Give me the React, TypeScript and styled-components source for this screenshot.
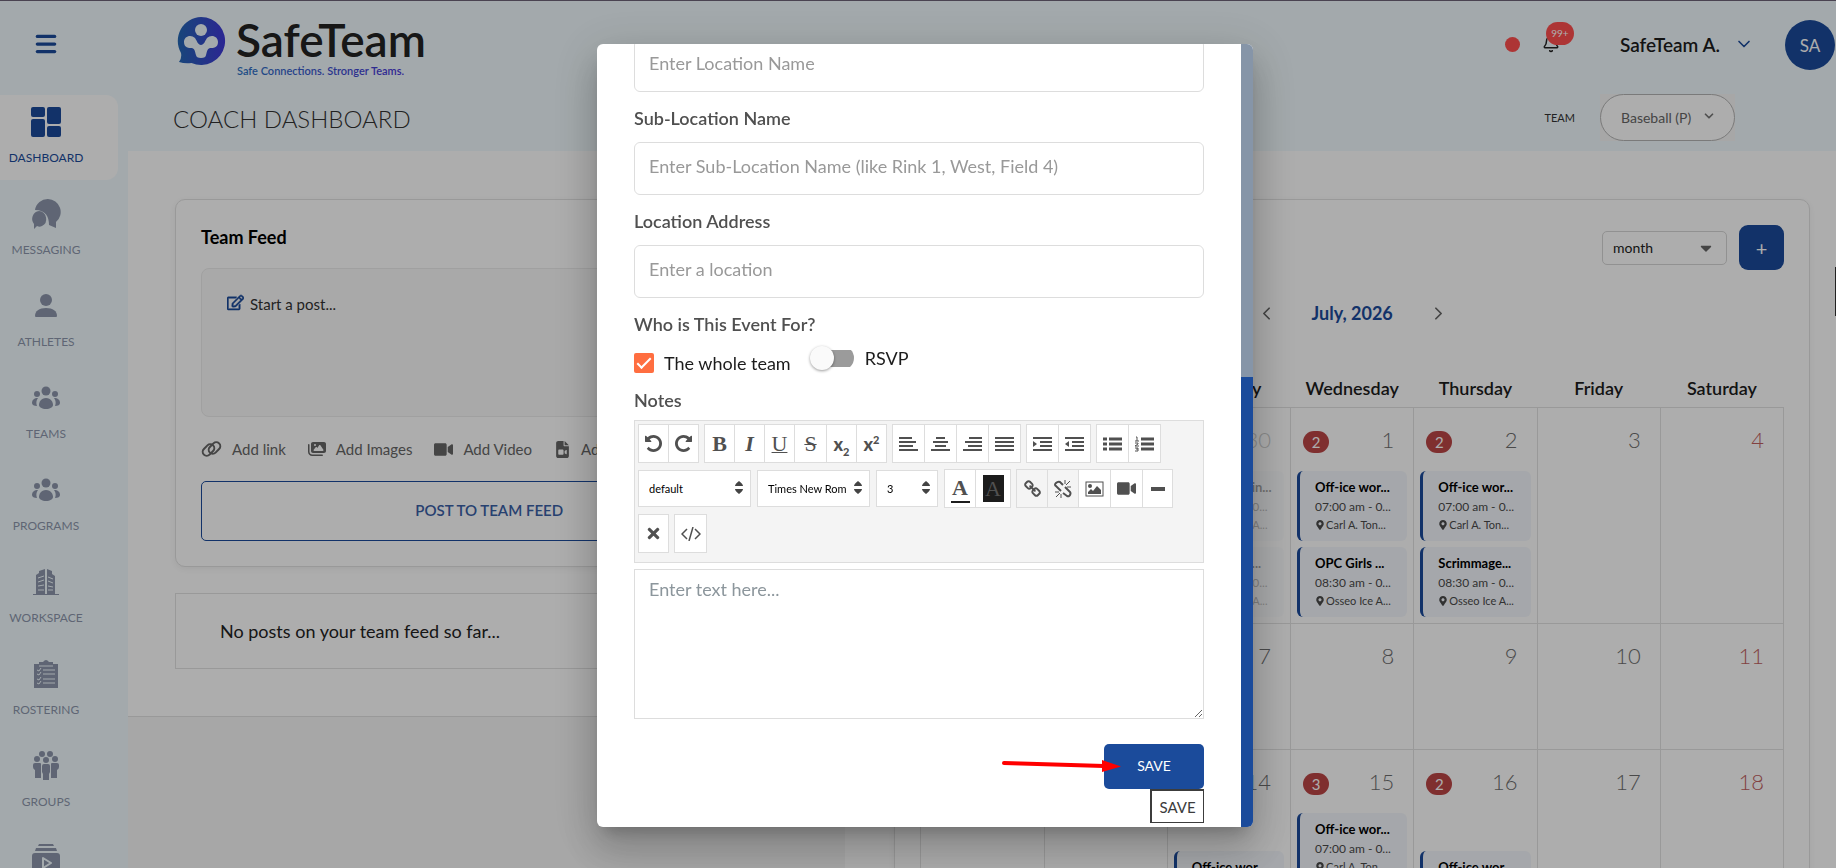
import React from "react";
import styled, { createGlobalStyle } from "styled-components";
import {
  FaCaretDown,
  FaMapMarkerAlt,
  FaRegEdit,
  FaTimes,
  FaVideo,
} from "react-icons/fa";
import { FaFileVideo, FaImages } from "react-icons/fa6";
import { ChevronDown, ChevronLeft, ChevronRight, Bell, Menu } from "lucide-react";

const blue = "#1b4b9b";
const line = "#e2e2e2";
const ink = "#505050";

const GlobalStyle = createGlobalStyle`
  *, *::before, *::after { box-sizing: border-box; }
  body {
    margin: 0;
    overflow: hidden;
    background: #f6f6f6;
    color: #222;
    font-family: Lato, "Open Sans", sans-serif;
    font-size: 14px;
  }
  button, input, select, textarea { font: inherit; color: inherit; margin: 0; }
  button { cursor: pointer; padding: 0; border: 0; background: none; }
  h1, h2, p, ul { margin: 0; padding: 0; font-weight: 400; }
  ul { list-style: none; }
  a { color: inherit; text-decoration: none; }
`;

/* ---------- page shell ---------- */

const Shell = styled.div`
  height: 100vh;
  overflow: hidden;
  display: flex;
  border-top: 1px solid #6e6478;
`;

const Sidebar = styled.nav`
  flex: 0 0 128px;
  background: #f1fafe;
  overflow: hidden;
`;

const MenuButton = styled.button`
  display: flex;
  align-items: center;
  justify-content: center;
  width: 92px;
  height: 86px;
  margin-bottom: 8px;
  color: ${blue};
`;

const NavItem = styled.a<{ $active?: boolean }>`
  display: block;
  width: 118px;
  height: 85px;
  margin-bottom: 7px;
  padding: 12px 26px 0 0;
  text-align: center;
  border-radius: 0 12px 12px 0;
  background: ${(p) => (p.$active ? "#fff" : "transparent")};
  color: ${(p) => (p.$active ? blue : "#8c96ac")};
`;

const NavIcon = styled.span`
  display: flex;
  align-items: center;
  justify-content: center;
  height: 30px;
  margin-bottom: 13px;
`;

const NavLabel = styled.span`
  display: block;
  font-size: 12px;
  line-height: 16px;
`;

const Page = styled.div`
  flex: 1;
  min-width: 0;
  display: flex;
  flex-direction: column;
`;

const Header = styled.header`
  background: #f1fafe;
  height: 150px;
  flex: none;
`;

const TopBar = styled.div`
  display: flex;
  align-items: center;
  height: 86px;
  padding-left: 49px;
`;

const Account = styled.div`
  display: flex;
  align-items: center;
  margin-left: auto;
`;

const StatusDot = styled.span`
  width: 15px;
  height: 15px;
  border-radius: 50%;
  background: #ff4e4e;
`;

const BellButton = styled.button`
  position: relative;
  display: flex;
  margin-left: 22px;
  color: #222;
`;

const BellCount = styled.span`
  position: absolute;
  left: 4px;
  top: -13px;
  width: 28px;
  height: 23px;
  border-radius: 12px;
  background: #ff4e4e;
  color: #fff;
  font-size: 10px;
  line-height: 23px;
  text-align: center;
`;

const UserButton = styled.button`
  display: flex;
  align-items: center;
  gap: 14px;
  margin-left: 60px;
  color: #1c1c1c;
  font-size: 19px;
  font-weight: 600;
`;

const Avatar = styled.span`
  display: flex;
  align-items: center;
  justify-content: center;
  width: 50px;
  height: 50px;
  margin: 2px 1px 0 31px;
  border-radius: 50%;
  background: ${blue};
  color: #fff;
  font-size: 17px;
`;

const TitleBar = styled.div`
  display: flex;
  align-items: center;
  height: 64px;
  padding: 0 101px 0 45px;
`;

const PageTitle = styled.h1`
  font-size: 24px;
  font-weight: 300;
  line-height: 64px;
  color: #333;
`;

const TeamPicker = styled.label`
  display: flex;
  align-items: center;
  gap: 25px;
  margin: 0 0 4px auto;
  font-size: 11px;
  color: #333;
`;

const TeamBox = styled.span`
  display: flex;
  width: 135px;
  height: 47px;
  background: #f6f6f6;
  position: relative;
  svg { position: absolute; right: 19px; top: 15px; color: #777; pointer-events: none; }
`;

const TeamSelect = styled.select`
  appearance: none;
  width: 100%;
  padding: 0 0 0 20px;
  border: 1px solid #b4b4b4;
  border-radius: 24px;
  background: #fff;
  font-size: 14px;
  color: #666;
`;

const Columns = styled.main`
  flex: 1;
  min-height: 0;
  display: grid;
  grid-template-columns: 42fr 58fr;
  align-items: start;
`;

/* ---------- feed column ---------- */

const FeedColumn = styled.section`
  background: #fff;
  padding: 48px 42px 47px 47px;
  border-bottom: 1px solid ${line};
`;

const Card = styled.div`
  border: 1px solid ${line};
  border-radius: 10px;
  padding: 25px;
  background: #fff;
  box-shadow: 0 2px 6px rgba(0, 0, 0, 0.06);
`;

const CardTitle = styled.h2`
  font-size: 18px;
  font-weight: 700;
  line-height: 24px;
  color: #000;
  margin-bottom: 19px;
`;

const PostBox = styled.div`
  display: flex;
  gap: 6px;
  height: 149px;
  padding: 25px;
  border: 1px solid #ececec;
  border-radius: 8px;
  background: #fafafa;
  font-size: 15px;
  line-height: 21px;
  color: #333;
  svg { color: ${blue}; stroke: ${blue}; stroke-width: 16px; }
`;

const Attachments = styled.div`
  display: flex;
  align-items: center;
  gap: 22px;
  height: 64px;
  white-space: nowrap;
  overflow: hidden;
`;

const AttachButton = styled.button`
  display: flex;
  align-items: center;
  gap: 10px;
  font-size: 15px;
  color: #666;
`;

const PostButton = styled.button`
  width: 100%;
  height: 60px;
  padding-bottom: 3px;
  border: 1px solid ${blue};
  border-radius: 5px;
  color: #3a60a6;
  font-size: 15px;
  font-weight: 600;
`;

const EmptyNote = styled.p`
  margin-top: 26px;
  padding: 0 44px;
  border: 1px solid ${line};
  font-size: 18px;
  line-height: 74px;
`;

/* ---------- calendar column ---------- */

const CalendarColumn = styled.section`
  background: #fff;
  padding: 48px 26px 0 49px;
`;

const CalendarTools = styled.div`
  display: flex;
  justify-content: flex-end;
  align-items: center;
  gap: 12px;
`;

const RangeBox = styled.label`
  position: relative;
  svg { position: absolute; right: 12px; top: 8px; color: #666; pointer-events: none; }
`;

const RangeSelect = styled.select`
  appearance: none;
  width: 125px;
  height: 34px;
  padding: 0 10px;
  border: 1px solid #d6d6d6;
  border-radius: 5px;
  background: #fff;
  font-size: 14px;
  color: #222;
`;

const AddButton = styled.button`
  width: 45px;
  height: 45px;
  border-radius: 9px;
  background: ${blue};
  color: #fff;
  font-size: 20px;
  line-height: 40px;
`;

const MonthBar = styled.div`
  display: flex;
  align-items: center;
  justify-content: center;
  gap: 35px;
  height: 86px;
  color: #666;
  button { display: flex; }
`;

const MonthName = styled.h2`
  font-size: 18px;
  font-weight: 700;
  color: ${blue};
`;

const MonthTable = styled.table`
  width: 100%;
  table-layout: fixed;
  border-collapse: collapse;
`;

const WeekHead = styled.th`
  height: 51px;
  padding: 13px 0 0;
  font-size: 18px;
  font-weight: 600;
  color: #1c1c1c;
`;

const DayCell = styled.td<{ $tall?: boolean; $muted?: boolean }>`
  height: ${(p) => (p.$tall ? 216 : 126)}px;
  padding: 0 6px 5px;
  border: 1px solid ${line};
  vertical-align: top;
  opacity: ${(p) => (p.$muted ? 0.35 : 1)};
`;

const DayHead = styled.div`
  display: flex;
  justify-content: space-between;
  align-items: center;
  height: 63px;
  padding: 0 13px 0 6px;
`;

const DayNumber = styled.span<{ $weekend?: boolean }>`
  margin-left: auto;
  font-size: 22px;
  font-weight: 300;
  color: ${(p) => (p.$weekend ? "#c06060" : "#6e6e6e")};
`;

const DayCount = styled.span`
  width: 26px;
  height: 22px;
  margin-top: 6px;
  border-radius: 11px;
  background: #bc4646;
  color: #fff;
  font-size: 15px;
  line-height: 22px;
  text-align: center;
`;

const EventStack = styled.div<{ $offset?: boolean }>`
  display: flex;
  flex-direction: column;
  gap: 6px;
  padding-top: ${(p) => (p.$offset ? 38 : 0)}px;
`;

const EventCard = styled.div`
  height: 70px;
  padding: 6px 0 0 15px;
  border-left: 3px solid ${blue};
  border-radius: 6px;
  background: #f4f7fc;
  color: #4a4a4a;
  font-size: 12px;
  line-height: 18px;
  white-space: nowrap;
  overflow: hidden;
`;

const EventTitle = styled.div`
  font-size: 13px;
  font-weight: 700;
  line-height: 21px;
  color: #000;
`;

const EventPlace = styled.div`
  font-size: 11px;
  svg { vertical-align: -1px; margin-right: 1px; }
`;

const SideTab = styled.span`
  position: fixed;
  right: 0;
  top: 267px;
  width: 1px;
  height: 49px;
  background: #333;
`;

/* ---------- dialog ---------- */

const Overlay = styled.div`
  position: fixed;
  inset: 0;
  display: flex;
  justify-content: center;
  padding: 44px 0 41px 14px;
  background: rgba(0, 0, 0, 0.32);
`;

const Dialog = styled.div`
  display: flex;
  width: 656px;
  max-width: 100%;
  border-radius: 6px;
  overflow: hidden;
  background: #fff;
  box-shadow: 0 11px 15px -7px rgba(0, 0, 0, 0.2), 0 24px 38px 3px rgba(0, 0, 0, 0.14),
    0 9px 46px 8px rgba(0, 0, 0, 0.12);
`;

const DialogForm = styled.form`
  flex: 1;
  min-width: 0;
  display: flex;
  flex-direction: column;
  justify-content: flex-end;
  padding: 0 37px 38px;
  overflow: hidden;
`;

const ScrollTrack = styled.div`
  flex: 0 0 12px;
  display: flex;
  flex-direction: column;
  justify-content: flex-end;
  background: #8695a8;
`;

const ScrollThumb = styled.div`
  height: 450px;
  background: ${blue};
`;

const FieldLabel = styled.label`
  display: block;
  flex: none;
  margin: 14px 0 12px;
  font-size: 18px;
  font-weight: 600;
  line-height: 24px;
  color: ${ink};
`;

const FieldInput = styled.input`
  display: block;
  flex: none;
  width: 100%;
  height: 53px;
  padding: 0 14px 5px;
  border: 1px solid #ddd;
  border-radius: 6px;
  font-size: 18px;
  &::placeholder { color: #999; opacity: 1; }
`;

const Audience = styled.div`
  display: flex;
  flex: none;
  height: 52px;
  margin-top: -12px;
  padding-top: 10px;
  font-size: 18px;
  line-height: 24px;
  color: #1c1c1c;
`;

const CheckLabel = styled.label`
  display: flex;
  align-items: center;
  gap: 10px;
  height: 34px;
`;

const CheckBox = styled.input`
  appearance: none;
  width: 20px;
  height: 20px;
  border-radius: 2px;
  background: #ff6e40;
  display: grid;
  place-items: center;
  &::after {
    content: "";
    width: 14px;
    height: 7px;
    margin-top: -4px;
    border: solid #fff;
    border-width: 0 0 2px 2px;
    transform: rotate(-45deg);
  }
`;

const SwitchLabel = styled.label`
  display: flex;
  align-items: center;
  gap: 11px;
  height: 24px;
  margin-left: 19px;
`;

const Switch = styled.input`
  appearance: none;
  display: flex;
  align-items: center;
  width: 44px;
  height: 24px;
  background: linear-gradient(#9b9b9b, #9b9b9b) right center / 36px 17px no-repeat;
  border-radius: 12px;
  &::after {
    content: "";
    width: 24px;
    height: 24px;
    border-radius: 50%;
    background: #fafafa;
    box-shadow: 0 1px 3px rgba(0, 0, 0, 0.4);
  }
`;

const NotesLabel = styled(FieldLabel)`
  margin: 0 0 8px;
`;

const Toolbar = styled.div`
  display: flex;
  flex: none;
  flex-wrap: wrap;
  align-content: flex-start;
  align-items: center;
  gap: 6px 5px;
  height: 143px;
  padding: 3px 3px 0;
  border: 1px solid #ddd;
  background: #f4f4f4;
  color: ${ink};
`;

const ToolGroup = styled.div`
  display: flex;
  padding-right: 1px;
`;

const Tool = styled.button<{ $size?: "medium" | "wide" | "swatch"; $dim?: boolean }>`
  display: flex;
  align-items: center;
  justify-content: center;
  width: ${(p) => ({ medium: 32, wide: 33, swatch: 36 }[p.$size as string] || 31)}px;
  height: 39px;
  margin-right: -1px;
  border: 1px solid #ddd;
  background: ${(p) => (p.$dim ? "#f4f4f4" : "#fff")};
  color: ${ink};
`;

const Glyph = styled.span<{ $italic?: boolean; $light?: boolean; $deco?: string }>`
  font-family: "Liberation Serif", serif;
  font-size: 22px;
  line-height: 24px;
  font-weight: ${(p) => (p.$light ? 400 : 700)};
  font-style: ${(p) => (p.$italic ? "italic" : "normal")};
  text-decoration: ${(p) => p.$deco || "none"};
  text-decoration-thickness: 1px;
`;

const Script = styled.span`
  font-size: 18px;
  line-height: 20px;
  font-weight: 900;
  sub, sup { font-size: 11px; line-height: 0; }
`;

const InkA = styled(Glyph)`
  width: 19px;
  text-align: center;
  line-height: 26px;
  border-bottom: 2px solid #1c1c1c;
`;

const PaperA = styled(Glyph)`
  width: 21px;
  text-align: center;
  line-height: 27px;
  background: #1c1c1c;
`;

const PickBox = styled.label<{ $small?: boolean }>`
  position: relative;
  display: flex;
  width: ${(p) => (p.$small ? 62 : 113)}px;
  height: 37px;
  margin-right: 1px;
  svg { position: absolute; right: 8px; top: 11px; pointer-events: none; }
`;

const Pick = styled.select`
  appearance: none;
  width: 100%;
  padding: 0 10px;
  border: 1px solid #ddd;
  border-radius: 0;
  background: #fff;
  color: #000;
  font-size: 11px;
`;

const NotesArea = styled.textarea`
  display: block;
  flex: none;
  width: 100%;
  height: 150px;
  margin-top: 6px;
  padding: 7px 14px;
  border: 1px solid #ddd;
  font-size: 18px;
  line-height: 24px;
  &::placeholder { color: #8c969c; opacity: 1; }
`;

const Actions = styled.div`
  position: relative;
  display: flex;
  flex: none;
  justify-content: flex-end;
  margin-top: 25px;
`;

const SaveButton = styled.button`
  width: 100px;
  height: 45px;
  padding-bottom: 2px;
  border-radius: 5px;
  background: ${blue};
  color: #fff;
  font-size: 14px;
`;

const SaveTip = styled.span`
  position: absolute;
  right: 0;
  top: 45px;
  width: 54px;
  height: 34px;
  border: 1px solid #3c3c3c;
  border-width: 2px 1px 1px 2px;
  background: #fff;
  color: #3c3c3c;
  font-size: 15px;
  line-height: 33px;
  text-align: center;
`;

const Arrow = styled.svg`
  position: absolute;
  right: 83px;
  top: 13px;
`;

/* ---------- drawings ---------- */

const Logo = () => (
  <svg width="252" height="78" viewBox="0 -12 252 78" role="img" aria-label="SafeTeam">
    <defs>
      <linearGradient id="ball" x1="0" x2="1">
        <stop offset="0" stopColor="#2468b4" />
        <stop offset="1" stopColor="#4038d8" />
      </linearGradient>
      <linearGradient id="words" gradientUnits="userSpaceOnUse" x1="60" x2="222" y1="0" y2="0">
        <stop offset="0" stopColor="#2f74c4" />
        <stop offset="1" stopColor="#4838d8" />
      </linearGradient>
    </defs>
    <path d="M24 0a24 24 0 1 1-9.500 46Q8 47 2 45q3-4 2-9A24 24 0 0 1 24 0Z" fill="url(#ball)" />
    <circle cx="24" cy="13" r="6" fill="#f1fafe" />
    <path
      d="M7 25c0-6 7-8 11-4 2 3 3 7 6 7s4-4 6-7c4-4 11-2 11 4s-5 6-8 6c-3 1-3 4-4 7 0 2-2 3-5 3s-5-1-5-3c-1-3-1-6-4-7-3 0-8 0-8-6Z"
      fill="#f1fafe"
    />
    <text x="59" y="40" fontFamily="Lato" fontWeight="600" fontSize="46" fill="#222">
      SafeTeam
    </text>
    <text x="60" y="58" fontFamily="Lato" fontWeight="600" fontSize="11" fill="url(#words)">
      Safe Connections. Stronger Teams.
    </text>
  </svg>
);

const DashboardIcon = () => (
  <svg width="30" height="30" viewBox="0 0 30 30" fill="currentColor">
    <rect x="0" y="0" width="14" height="10" rx="2" />
    <rect x="16" y="0" width="14" height="17" rx="2" />
    <rect x="0" y="12" width="14" height="18" rx="2" />
    <rect x="16" y="19" width="14" height="11" rx="2" />
  </svg>
);

const MessagingIcon = () => (
  <svg width="30" height="30" viewBox="0 0 30 30" fill="currentColor">
    <path d="M17 0a13 13 0 0 1 8 23v6l-7-3c0-8-3-15-14-15A13 13 0 0 1 17 0Z" />
    <path d="M8 12a8 8 0 0 1 3 15c-2 1-3 1-5 0l-3 3v-5a8 8 0 0 1 5-13Z" />
  </svg>
);

const AthleteIcon = () => (
  <svg width="24" height="24" viewBox="0 0 24 24" fill="currentColor">
    <ellipse cx="12" cy="6" rx="6" ry="6" />
    <path d="M1 22c0-5 4-8 11-8s11 3 11 8q0 1-1 1H2q-1 0-1-1Z" />
  </svg>
);

const TeamIcon = () => (
  <svg width="28" height="24" viewBox="0 0 28 24" fill="currentColor">
    <circle cx="14" cy="5" r="4.500" />
    <circle cx="5" cy="8" r="3" />
    <circle cx="23" cy="8" r="3" />
    <path d="M14 12c5 0 7 4 7 7 0 2-3 4-7 4s-7-2-7-4c0-3 2-7 7-7Z" />
    <path d="M6 12c-2 3-2 5-1 8-3 0-5-1-5-3 0-3 2-5 6-5ZM22 12c2 3 2 5 1 8 3 0 5-1 5-3 0-3-2-5-6-5Z" />
  </svg>
);

const BuildingIcon = () => (
  <svg width="26" height="28" viewBox="0 0 26 28">
    <path d="M3 7 6 5V3l6-2v25H3ZM14 1l5 2v3l3 2v18h-8ZM0 26h26v1H0Z" fill="currentColor" />
    <path
      d="M5 10l6-2M5 14l6-2M5 18l6-1M5 22h6M15 9l5 2M15 13l5 2M15 18l5 1M15 22h5"
      stroke="#f1fafe"
    />
  </svg>
);

const ClipboardIcon = () => (
  <svg width="24" height="28" viewBox="0 0 24 28">
    <path d="M0 4h5V2h4q3-4 6 0h4v2h5v24H0Z" fill="currentColor" />
    <path d="M5 6h14" stroke="#f1fafe" />
    <path
      d="M9 10h12M9 14h12M9 19h12M9 23h12M3 10l2 1 2-3M3 14l2 1 2-3M3 19l2 1 2-3M3 23l2 1 2-3"
      stroke="#f1fafe"
      fill="none"
    />
  </svg>
);

const GroupsIcon = () => (
  <svg width="26" height="30" viewBox="0 0 26 30" fill="currentColor">
    <circle cx="9" cy="3" r="3" />
    <circle cx="17" cy="3" r="3" />
    <circle cx="4" cy="8" r="3" />
    <circle cx="22" cy="8" r="3" />
    <circle cx="13" cy="9" r="3" />
    <path d="M2 12h5q1 0 1 1v14H2v-8q-2-1-2-3v-2q0-2 2-2ZM24 12h-5q-1 0-1 1v14h6v-8q2-1 2-3v-2q0-2-2-2Z" />
    <path d="M11 13h4q2 0 2 2v6l-1 2v6h-6v-6l-1-2v-6q0-2 2-2Z" />
  </svg>
);

const VideosIcon = () => (
  <svg width="28" height="28" viewBox="0 0 28 28">
    <path d="M7 0h14l1 2H6ZM4 4h20l1 3H3Z" fill="currentColor" />
    <rect y="9" width="28" height="19" rx="3" fill="currentColor" />
    <path d="M11 14l8 5-8 5Z" fill="none" stroke="#f1fafe" strokeWidth="2" strokeLinejoin="round" />
  </svg>
);

const LinkIcon = () => (
  <svg width="21" height="18" viewBox="0 0 21 18" fill="none" stroke="currentColor" strokeWidth="2">
    <rect x="1" y="6" width="13" height="8" rx="4" transform="rotate(-45 7.500 10)" />
    <rect x="7" y="4" width="13" height="8" rx="4" transform="rotate(-45 13.500 8)" />
  </svg>
);

const undoPath =
  "M1664 896q0 156-61 298t-164 245-245 164-298 61q-172 0-327-72.500t-264-204.500q-7-10-6.500-22.500t8.500-20.500l137-138q10-9 25-9 16 2 23 12 73 95 179 147t225 52q104 0 198.500-40.500t163.500-109.500 109.500-163.500 40.500-198.500-40.500-198.500-109.500-163.500-163.500-109.500-198.500-40.500q-98 0-188 35.500t-160 101.500l137 138q31 30 14 69-17 40-59 40h-448q-26 0-45-19t-19-45v-448q0-42 40-59 39-17 69 14l130 129q107-101 244.500-156.500t284.500-55.500q156 0 298 61t245 164 164 245 61 298z";

const chainPath =
  "M1520 1216q0-40-28-68l-208-208q-28-28-68-28-42 0-72 32 3 3 19 18.500t21.500 21.500 15 19 13 25.500 3.500 27.500q0 40-28 68t-68 28q-15 0-27.500-3.500t-25.500-13-19-15-21.500-21.500-18.500-19q-33 31-33 73 0 40 28 68l206 207q27 27 68 27 40 0 68-26l147-146q28-28 28-67zm-703-705q0-40-28-68l-206-207q-28-28-68-28-39 0-68 27l-147 146q-28 28-28 67 0 40 28 68l208 208q27 27 68 27 42 0 72-31-3-3-19-18.500t-21.500-21.500-15-19-13-25.500-3.500-27.500q0-40 28-68t68-28q15 0 27.500 3.500t25.500 13 19 15 21.500 21.500 18.500 19q33-31 33-73zm895 705q0 120-85 203l-147 146q-83 83-203 83-121 0-204-85l-206-207q-83-83-83-203 0-123 88-209l-88-88q-86 88-208 88-120 0-204-84l-208-208q-84-84-84-204t85-203l147-146q83-83 203-83 121 0 204 85l206 207q83 83 83 203 0 123-88 209l88 88q86-88 208-88 120 0 204 84l208 208q84 84 84 204z";

const TurnIcon = ({ flip }: { flip?: boolean }) => (
  <svg width="17" height="17" viewBox="128 128 1536 1536" fill="currentColor">
    <path d={undoPath} transform={flip ? "translate(1792 0) scale(-1 1)" : undefined} />
  </svg>
);

const Bars = ({ d, thick, children }: { d: string; thick?: boolean; children?: React.ReactNode }) => (
  <svg
    width="19"
    height="16"
    viewBox="0 0 19 16"
    stroke="currentColor"
    strokeWidth={thick ? 3 : 2}
    fill="none"
  >
    <path d={d} />
    {children}
  </svg>
);

const ChainIcon = () => (
  <svg width="17" height="17" viewBox="64 0 1664 1664" fill="currentColor">
    <path d={chainPath} />
  </svg>
);

const BrokenChainIcon = () => (
  <svg width="18" height="18" viewBox="0 0 18 18" fill="none" stroke="currentColor" strokeWidth="2">
    <path d="M9 5 6 2Q4 1 2 3T2 6l5 5M9 13l4 3q2 1 3-1t0-3l-5-5" />
    <path d="M11 0v4M12 5l4-4M13 7h4M1 12h4M2 17l4-4M7 14v4" strokeWidth="1" />
  </svg>
);

const PictureIcon = () => (
  <svg width="19" height="16" viewBox="0 0 19 16">
    <rect x="1" y="1" width="17" height="14" fill="none" stroke="currentColor" />
    <circle cx="5" cy="5" r="2" fill="currentColor" />
    <path d="M3 13v-2l3-3 2 2 4-5 4 4v4Z" fill="currentColor" />
  </svg>
);

const CodeIcon = () => (
  <svg width="20" height="14" viewBox="0 0 20 14" fill="none" stroke="currentColor" strokeWidth="1.500">
    <path d="M6 2 1 7l5 5M14 2l5 5-5 5M12 0 8 14" />
  </svg>
);

const RuleIcon = () => (
  <svg width="14" height="4" viewBox="0 0 14 4">
    <rect width="14" height="4" fill="currentColor" />
  </svg>
);

const Sorter = () => (
  <svg width="8" height="14" viewBox="0 0 8 14" fill="#444">
    <path d="M0 5q0-2 4-5 4 3 4 5ZM0 8h8q0 2-4 5-4-3-4-5Z" />
  </svg>
);

/* ---------- data ---------- */

const navItems = [
  { label: "DASHBOARD", icon: <DashboardIcon /> },
  { label: "MESSAGING", icon: <MessagingIcon /> },
  { label: "ATHLETES", icon: <AthleteIcon /> },
  { label: "TEAMS", icon: <TeamIcon /> },
  { label: "PROGRAMS", icon: <TeamIcon /> },
  { label: "WORKSPACE", icon: <BuildingIcon /> },
  { label: "ROSTERING", icon: <ClipboardIcon /> },
  { label: "GROUPS", icon: <GroupsIcon /> },
  { label: "VIDEOS", icon: <VideosIcon /> },
];

type Event = [string, string, string];
type Day = { n: number; count?: number; muted?: boolean; offset?: boolean; events?: Event[] };

const offIce: Event = ["Off-ice wor...", "07:00 am - 0...", "Carl A. Ton..."];
const opc: Event = ["OPC Girls ...", "08:30 am - 0...", "Osseo Ice A..."];
const scrimmage: Event = ["Scrimmage...", "08:30 am - 0...", "Osseo Ice A..."];

const weeks: Day[][] = [
  [
    { n: 28, muted: true },
    { n: 29, muted: true },
    { n: 30, muted: true, events: [["Off-ice train...", "07:00 am - 0...", "Osseo Ice A..."], opc] },
    { n: 1, count: 2, events: [offIce, opc] },
    { n: 2, count: 2, events: [offIce, scrimmage] },
    { n: 3 },
    { n: 4 },
  ],
  [5, 6, 7, 8, 9, 10, 11].map((n) => ({ n })),
  [
    { n: 12 },
    { n: 13 },
    { n: 14, offset: true, events: [offIce] },
    { n: 15, count: 3, events: [offIce] },
    { n: 16, count: 2, offset: true, events: [offIce] },
    { n: 17 },
    { n: 18 },
  ],
];

const weekdays = ["Sunday", "Monday", "Tuesday", "Wednesday", "Thursday", "Friday", "Saturday"];

/* ---------- parts ---------- */

const Feed = () => (
  <FeedColumn>
    <Card>
      <CardTitle>Team Feed</CardTitle>
      <PostBox>
        <FaRegEdit size={17} />
        <span>Start a post...</span>
      </PostBox>
      <Attachments>
        <AttachButton><LinkIcon />Add link</AttachButton>
        <AttachButton><FaImages size={18} />Add Images</AttachButton>
        <AttachButton><FaVideo size={19} />Add Video</AttachButton>
        <AttachButton><FaFileVideo size={17} />Add Files</AttachButton>
      </Attachments>
      <PostButton>POST TO TEAM FEED</PostButton>
    </Card>
    <EmptyNote>No posts on your team feed so far...</EmptyNote>
  </FeedColumn>
);

const Calendar = () => (
  <CalendarColumn>
    <Card>
      <CalendarTools>
        <RangeBox>
          <RangeSelect aria-label="Calendar range" defaultValue="month">
            <option>month</option>
            <option>week</option>
          </RangeSelect>
          <FaCaretDown size={18} />
        </RangeBox>
        <AddButton aria-label="Add event">+</AddButton>
      </CalendarTools>
      <MonthBar>
        <button aria-label="Previous month"><ChevronLeft size={21} /></button>
        <MonthName>July, 2026</MonthName>
        <button aria-label="Next month"><ChevronRight size={21} /></button>
      </MonthBar>
      <MonthTable>
        <thead>
          <tr>{weekdays.map((d) => <WeekHead key={d}>{d}</WeekHead>)}</tr>
        </thead>
        <tbody>
          {weeks.map((week, w) => (
            <tr key={w}>
              {week.map((day, i) => (
                <DayCell key={day.n} $tall={w !== 1} $muted={day.muted}>
                  <DayHead>
                    {day.count && <DayCount>{day.count}</DayCount>}
                    <DayNumber $weekend={i === 6}>{day.n}</DayNumber>
                  </DayHead>
                  {day.events && (
                    <EventStack $offset={day.offset}>
                      {day.events.map(([title, time, place]) => (
                        <EventCard key={title}>
                          <EventTitle>{title}</EventTitle>
                          <div>{time}</div>
                          <EventPlace><FaMapMarkerAlt size={10} />{place}</EventPlace>
                        </EventCard>
                      ))}
                    </EventStack>
                  )}
                </DayCell>
              ))}
            </tr>
          ))}
        </tbody>
      </MonthTable>
    </Card>
  </CalendarColumn>
);

const EditorToolbar = () => (
  <Toolbar>
    <ToolGroup>
      <Tool type="button" aria-label="Undo"><TurnIcon /></Tool>
      <Tool type="button" aria-label="Redo"><TurnIcon flip /></Tool>
    </ToolGroup>
    <ToolGroup>
      <Tool type="button" aria-label="Bold"><Glyph>B</Glyph></Tool>
      <Tool type="button" aria-label="Italic"><Glyph $italic>I</Glyph></Tool>
      <Tool type="button" aria-label="Underline"><Glyph $light $deco="underline">U</Glyph></Tool>
      <Tool type="button" aria-label="Strike through" $size="wide">
        <Glyph $light $deco="line-through">S</Glyph>
      </Tool>
      <Tool type="button" aria-label="Subscript"><Script>x<sub>2</sub></Script></Tool>
      <Tool type="button" aria-label="Superscript"><Script>x<sup>2</sup></Script></Tool>
    </ToolGroup>
    <ToolGroup>
      <Tool type="button" aria-label="Align left" $size="wide"><Bars d="M0 2h13M0 6h17M0 10h14M0 14h19" /></Tool>
      <Tool type="button" aria-label="Align center" $size="wide"><Bars d="M5 2h9M2 6h15M4 10h11M0 14h19" /></Tool>
      <Tool type="button" aria-label="Align right" $size="wide"><Bars d="M6 2h13M2 6h17M5 10h14M0 14h19" /></Tool>
      <Tool type="button" aria-label="Justify" $size="wide"><Bars d="M0 2h19M0 6h19M0 10h19M0 14h19" /></Tool>
    </ToolGroup>
    <ToolGroup>
      <Tool type="button" aria-label="Indent" $size="wide">
        <Bars d="M0 2h19M7 6h12M7 10h12M0 14h19"><path d="M0 5l4 3-4 3Z" fill="currentColor" stroke="none" /></Bars>
      </Tool>
      <Tool type="button" aria-label="Outdent" $size="wide">
        <Bars d="M0 2h19M7 6h12M7 10h12M0 14h19"><path d="M4 5 0 8l4 3Z" fill="currentColor" stroke="none" /></Bars>
      </Tool>
    </ToolGroup>
    <ToolGroup>
      <Tool type="button" aria-label="Bulleted list" $size="wide">
        <Bars thick d="M6 3h13M6 8h13M6 13h13M0 3h4M0 8h4M0 13h4" />
      </Tool>
      <Tool type="button" aria-label="Numbered list" $size="wide">
        <Bars thick d="M6 3h13M6 8h13M6 13h13">
          <path d="M1 1h1v4M0 5h4M0 7h3v1l-3 2h4M0 12h3v3H0M1 13h2" strokeWidth="1" />
        </Bars>
      </Tool>
    </ToolGroup>
    <PickBox>
      <Pick aria-label="Block style"><option>default</option></Pick>
      <Sorter />
    </PickBox>
    <PickBox>
      <Pick aria-label="Font"><option>Times New Rom</option></Pick>
      <Sorter />
    </PickBox>
    <PickBox $small>
      <Pick aria-label="Font size"><option>3</option></Pick>
      <Sorter />
    </PickBox>
    <ToolGroup>
      <Tool type="button" aria-label="Text colour" $size="medium"><InkA>A</InkA></Tool>
      <Tool type="button" aria-label="Background colour" $size="swatch"><PaperA $light>A</PaperA></Tool>
    </ToolGroup>
    <ToolGroup>
      <Tool type="button" aria-label="Insert link" $size="medium" $dim><ChainIcon /></Tool>
      <Tool type="button" aria-label="Remove link" $size="medium" $dim><BrokenChainIcon /></Tool>
      <Tool type="button" aria-label="Insert image" $size="wide"><PictureIcon /></Tool>
      <Tool type="button" aria-label="Insert video" $size="wide"><FaVideo size={19} /></Tool>
      <Tool type="button" aria-label="Horizontal rule"><RuleIcon /></Tool>
    </ToolGroup>
    <ToolGroup>
      <Tool type="button" aria-label="Clear formatting"><FaTimes size={17} /></Tool>
    </ToolGroup>
    <ToolGroup>
      <Tool type="button" aria-label="Source" $size="wide"><CodeIcon /></Tool>
    </ToolGroup>
  </Toolbar>
);

const EventDialog = () => (
  <Overlay>
    <Dialog role="dialog" aria-modal="true" aria-label="Event">
      <DialogForm>
        <FieldInput aria-label="Location Name" placeholder="Enter Location Name" />
        <FieldLabel htmlFor="sub">Sub-Location Name</FieldLabel>
        <FieldInput id="sub" placeholder="Enter Sub-Location Name (like Rink 1, West, Field 4)" />
        <FieldLabel htmlFor="address">Location Address</FieldLabel>
        <FieldInput id="address" placeholder="Enter a location" />
        <FieldLabel as="p">Who is This Event For?</FieldLabel>
        <Audience>
          <CheckLabel><CheckBox type="checkbox" defaultChecked />The whole team</CheckLabel>
          <SwitchLabel><Switch type="checkbox" role="switch" />RSVP</SwitchLabel>
        </Audience>
        <NotesLabel htmlFor="notes">Notes</NotesLabel>
        <EditorToolbar />
        <NotesArea id="notes" placeholder="Enter text here..." />
        <Actions>
          <SaveButton type="button">SAVE</SaveButton>
          <SaveTip role="tooltip">SAVE</SaveTip>
          <Arrow width="119" height="18" viewBox="0 0 119 18" aria-hidden="true">
            <path d="M2 6 102 9" stroke="#f00" strokeWidth="4" strokeLinecap="round" />
            <path d="M100 3 119 9.500 100 15Z" fill="#f00" />
          </Arrow>
        </Actions>
      </DialogForm>
      <ScrollTrack><ScrollThumb /></ScrollTrack>
    </Dialog>
  </Overlay>
);

export default function App() {
  return (
    <>
      <GlobalStyle />
      <Shell>
        <Sidebar>
          <MenuButton aria-label="Menu"><Menu size={26} strokeWidth={3} /></MenuButton>
          {navItems.map((item, i) => (
            <NavItem key={item.label} href="#" $active={i === 0}>
              <NavIcon>{item.icon}</NavIcon>
              <NavLabel>{item.label}</NavLabel>
            </NavItem>
          ))}
        </Sidebar>
        <Page>
          <Header>
            <TopBar>
              <Logo />
              <Account>
                <StatusDot />
                <BellButton aria-label="Notifications">
                  <Bell size={18} />
                  <BellCount>99+</BellCount>
                </BellButton>
                <UserButton>
                  SafeTeam A.
                  <ChevronDown size={20} color={blue} />
                </UserButton>
                <Avatar>SA</Avatar>
              </Account>
            </TopBar>
            <TitleBar>
              <PageTitle>COACH DASHBOARD</PageTitle>
              <TeamPicker>
                TEAM
                <TeamBox>
                  <TeamSelect defaultValue="Baseball (P)"><option>Baseball (P)</option></TeamSelect>
                  <ChevronDown size={14} strokeWidth={3} />
                </TeamBox>
              </TeamPicker>
            </TitleBar>
          </Header>
          <Columns>
            <Feed />
            <Calendar />
          </Columns>
        </Page>
        <SideTab />
      </Shell>
      <EventDialog />
    </>
  );
}
